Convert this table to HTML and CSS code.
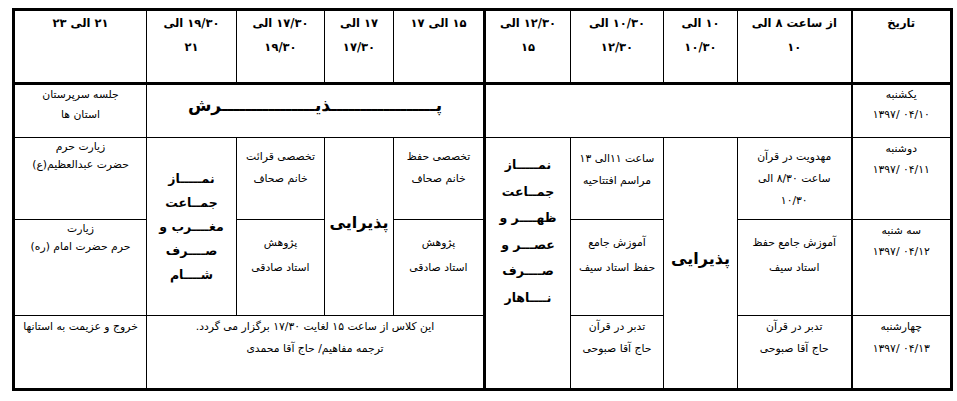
FILE: index.html
```html
<!DOCTYPE html>
<html lang="fa">
<head>
<meta charset="utf-8">
<title>برنامه</title>
<link rel="stylesheet" href="styles.css">
</head>
<body>
<div class="page">
<table class="schedule" dir="rtl">
<colgroup>
<col class="c-date"><col class="c-8"><col class="c-10"><col class="c-1030"><col class="c-1230"><col class="c-15"><col class="c-17"><col class="c-1730"><col class="c-1930"><col class="c-21">
</colgroup>
<tr class="r-head">
<th class="date-col">تاریخ</th>
<th>از ساعت ۸ الی<br>۱۰</th>
<th>۱۰ الی<br><span class="num">۱۰/۳۰</span></th>
<th><span class="num">۱۰/۳۰</span> الی<br><span class="num">۱۲/۳۰</span></th>
<th class="split"><span class="num">۱۲/۳۰</span> الی<br>۱۵</th>
<th class="split-r">۱۵ الی ۱۷</th>
<th>۱۷ الی<br><span class="num">۱۷/۳۰</span></th>
<th><span class="num">۱۷/۳۰</span> الی<br><span class="num">۱۹/۳۰</span></th>
<th><span class="num">۱۹/۳۰</span> الی<br>۲۱</th>
<th>۲۱ الی ۲۳</th>
</tr>
<tr class="r-sun">
<td class="date-col lh20">یکشنبه<br><span class="num">۱۳۹۷/ ۰۴/۱۰</span></td>
<td colspan="4" class="split"></td>
<td colspan="4" class="reception split-r">پــــــــــــــــــذیــــــــــــــــرش</td>
<td class="lh20">جلسه سرپرستان<br>استان ها</td>
</tr>
<tr class="r-mon">
<td class="date-col lh21">دوشنبه<br><span class="num">۱۳۹۷/ ۰۴/۱۱</span></td>
<td class="pt8">مهدویت در قرآن<br>ساعت <span class="num">۸/۳۰</span> الی<br><span class="num">۱۰/۳۰</span></td>
<td rowspan="3" class="big">پذیرایی</td>
<td class="pt10">ساعت ۱۱الی ۱۳<br>مراسم افتتاحیه</td>
<td rowspan="3" class="prayer noon split">نمـــــاز<br>جمــاعت<br>ظهــــر و<br>عصـــر و<br>صــــرف<br>نــــاهار</td>
<td class="pt8 split-r">تخصصی حفظ<br>خانم صحاف</td>
<td rowspan="2" class="big">پذیرایی</td>
<td class="pt8">تخصصی قرائت<br>خانم صحاف</td>
<td rowspan="2" class="prayer eve">نمـــــاز<br>جمــاعت<br>مغــــرب و<br>صــــرف<br>شــــام</td>
<td class="lh19">زیارت حرم<br>حضرت عبدالعظیم(ع)</td>
</tr>
<tr class="r-tue">
<td class="date-col lh21">سه شنبه<br><span class="num">۱۳۹۷/ ۰۴/۱۲</span></td>
<td class="pt10 lh25">آموزش جامع حفظ<br>استاد سیف</td>
<td class="pt10 lh25">آموزش جامع<br>حفظ استاد سیف</td>
<td class="pt10 lh25 split-r">پژوهش<br>استاد صادقی</td>
<td class="pt10 lh25">پژوهش<br>استاد صادقی</td>
<td class="lh19">زیارت<br>حرم حضرت امام (ره)</td>
</tr>
<tr class="r-wed">
<td class="date-col">چهارشنبه<br><span class="num">۱۳۹۷/ ۰۴/۱۳</span></td>
<td>تدبر در قرآن<br>حاج آقا صبوحی</td>
<td>تدبر در قرآن<br>حاج آقا صبوحی</td>
<td colspan="4" class="split-r">این کلاس از ساعت ۱۵ لغایت <span class="num">۱۷/۳۰</span> برگزار می گردد.<br>ترجمه مفاهیم/ حاج آقا محمدی</td>
<td>خروج و عزیمت به استانها</td>
</tr>
</table>
</div>
</body>
</html>
```
FILE: styles.css
```css
html, body {
  margin: 0;
  padding: 0;
  background: #ffffff;
}

body {
  font-family: "DejaVu Sans", sans-serif;
  color: #000000;
}

.page {
  padding: 8px 0 0 12px;
}

.schedule {
  border-collapse: collapse;
  table-layout: fixed;
  width: 941px;
  border: 3px solid #000000;
}

.c-date { width: 100px; }
.c-8 { width: 114px; }
.c-10 { width: 74px; }
.c-1030 { width: 93px; }
.c-1230 { width: 86px; }
.c-15 { width: 91px; }
.c-17 { width: 69px; }
.c-1730 { width: 88px; }
.c-1930 { width: 90px; }
.c-21 { width: 133px; }

.r-head { height: 74px; }
.r-sun { height: 54px; }
.r-mon { height: 82px; }
.r-tue { height: 96px; }
.r-wed { height: 74px; }

th, td {
  border: 1px solid #000000;
  padding: 0 2px;
  vertical-align: top;
  text-align: center;
  font-size: 10.8px;
  line-height: 22px;
  font-weight: normal;
  white-space: nowrap;
  overflow: hidden;
}

th {
  font-weight: bold;
  font-size: 11.5px;
  line-height: 24px;
  border-bottom: 3px solid #000000;
}

.date-col {
  border-left: 2px solid #000000;
}

.split {
  border-left: 3px solid #000000;
}

.split-r {
  border-right: 3px solid #000000;
}

.num {
  direction: ltr;
  unicode-bidi: isolate;
}

.lh19 { line-height: 18px; }
.lh20 { line-height: 20px; }
.lh21 { line-height: 21px; }
.lh25 { line-height: 25px; }
.pt8 { padding-top: 8px; }
.pt10 { padding-top: 10px; }

.reception {
  font-weight: bold;
  font-size: 17px;
  line-height: 24px;
  padding-top: 8px;
}

.big {
  font-weight: bold;
  font-size: 16px;
  vertical-align: middle;
  padding-bottom: 8px;
}

.prayer {
  font-weight: bold;
  font-size: 12.5px;
}

.prayer.eve {
  vertical-align: middle;
  line-height: 24px;
}

.prayer.noon {
  line-height: 26.5px;
  padding-top: 14px;
}
```
